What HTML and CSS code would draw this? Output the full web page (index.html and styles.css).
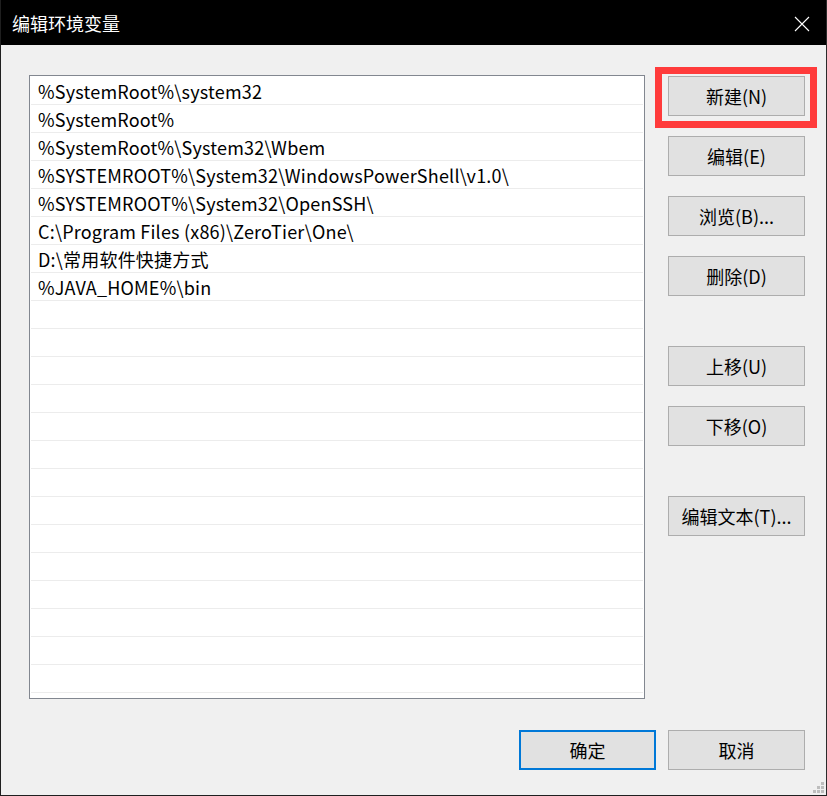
FILE: index.html
```html
<!DOCTYPE html>
<html lang="zh-CN">
<head>
  <meta charset="utf-8"/>
  <title>编辑环境变量</title>
  <link rel="stylesheet" href="styles.css">
</head>
<body>
  <div class="window">
    <div class="titlebar">
      <span class="title">编辑环境变量</span>
      <svg class="close" width="16" height="16" viewBox="0 0 16 16">
        <path d="M1 1 L15 15 M15 1 L1 15" stroke="#fff" stroke-width="1.1" fill="none"/>
      </svg>
    </div>

    <div class="content">
      <div class="main">
        <ul class="pathlist">
          <li>%SystemRoot%\system32</li>
          <li>%SystemRoot%</li>
          <li>%SystemRoot%\System32\Wbem</li>
          <li>%SYSTEMROOT%\System32\WindowsPowerShell\v1.0\</li>
          <li>%SYSTEMROOT%\System32\OpenSSH\</li>
          <li>C:\Program Files (x86)\ZeroTier\One\</li>
          <li>D:\常用软件快捷方式</li>
          <li>%JAVA_HOME%\bin</li>
          <li></li><li></li><li></li><li></li><li></li><li></li><li></li>
          <li></li><li></li><li></li><li></li><li></li><li></li><li></li>
        </ul>

        <div class="actions">
          <div class="group">
            <button class="btn">新建(N)</button>
            <button class="btn">编辑(E)</button>
            <button class="btn">浏览(B)...</button>
            <button class="btn">删除(D)</button>
          </div>
          <div class="group">
            <button class="btn">上移(U)</button>
            <button class="btn">下移(O)</button>
          </div>
          <div class="group">
            <button class="btn">编辑文本(T)...</button>
          </div>
        </div>
      </div>

      <div class="footer">
        <button class="btn btn-default">确定</button>
        <button class="btn">取消</button>
      </div>
    </div>

    <!-- marcador rojo sobre "Nuevo" -->
    <div class="highlight"></div>

    <svg class="grip" width="11" height="11" viewBox="0 0 11 11">
      <rect x="8" y="0" width="3" height="3" fill="#bdbdbd"/>
      <rect x="4" y="4" width="3" height="3" fill="#bdbdbd"/>
      <rect x="8" y="4" width="3" height="3" fill="#bdbdbd"/>
      <rect x="0" y="8" width="3" height="3" fill="#bdbdbd"/>
      <rect x="4" y="8" width="3" height="3" fill="#bdbdbd"/>
      <rect x="8" y="8" width="3" height="3" fill="#bdbdbd"/>
    </svg>
  </div>
</body>
</html>
```

FILE: styles.css
```css
* {
  box-sizing: border-box;
}
body {
  margin: 0;
  font-family: "Noto Sans CJK SC", "Noto Sans", sans-serif;
  background: #f0f0f0;
}
.window {
  position: relative;
  width: 827px;
  height: 796px;
  background: #f0f0f0;
  border-left: 1px solid #1f1f1f;
  border-right: 1px solid #2b2b2b;
  border-bottom: 1px solid #1f1f1f;
}
.titlebar {
  height: 45px;
  background: #000;
  display: flex;
  align-items: center;
  padding: 0 16px 0 11px;
}
.title {
  color: #fff;
  font-size: 18px;
}
.close {
  margin-left: auto;
  margin-top: 2px;
}
.content {
  padding: 30px 0 0 28px;
}
.main {
  display: flex;
}
.pathlist {
  list-style: none;
  margin: 0;
  padding: 1px 1px 0;
  width: 616px;
  height: 624px;
  background: #fff;
  border: 1px solid #828790;
  overflow: hidden;
}
.pathlist li {
  height: 28px;
  padding-left: 7px;
  font-size: 18px;
  letter-spacing: 0.2px;
  line-height: 28px;
  color: #000;
  border-bottom: 1px solid #ececec;
  white-space: nowrap;
}
.actions {
  margin-left: 23px;
  padding-top: 1px;
  display: flex;
  flex-direction: column;
  gap: 50px;
}
.group {
  display: flex;
  flex-direction: column;
  gap: 20px;
}
.btn {
  width: 137px;
  height: 40px;
  padding: 0;
  background: #e1e1e1;
  border: 1px solid #adadad;
  font-family: inherit;
  font-size: 18px;
  color: #000;
}
.btn-default {
  border: 2px solid #0078d7;
}
.footer {
  display: flex;
  gap: 12px;
  margin-top: 31px;
  padding-left: 490px;
}
.highlight {
  position: absolute;
  left: 654px;
  top: 67px;
  width: 162px;
  height: 61px;
  border: 7px solid #ff3b3b;
}
.grip {
  position: absolute;
  right: 2px;
  bottom: 2px;
}
```
